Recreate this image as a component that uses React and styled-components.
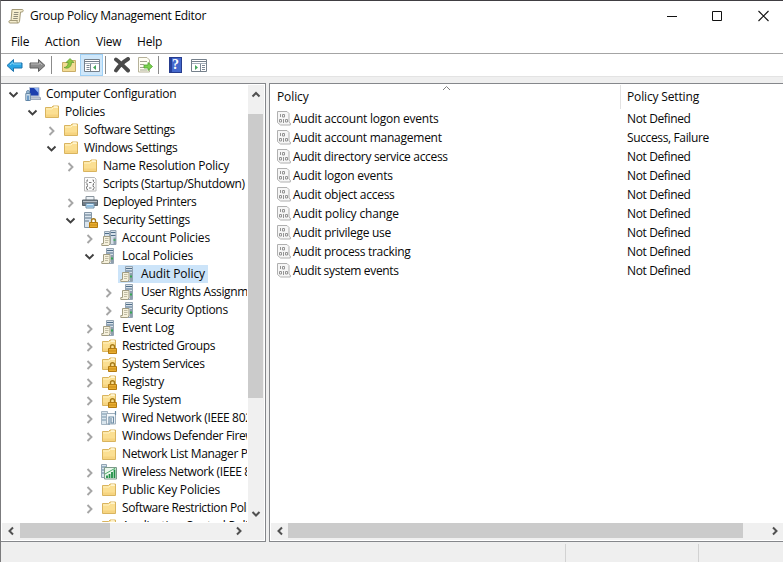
import React from 'react';
import styled, { createGlobalStyle } from 'styled-components';

const GlobalStyle = createGlobalStyle`
  * { box-sizing: border-box; }
  body { margin: 0; background: #efefef; overflow: hidden; }
`;

const Window = styled.div`
  width: 783px;
  height: 562px;
  display: flex;
  flex-direction: column;
  background: #efefef;
  border-top: 1px solid #403e42;
  border-left: 1px solid #7b7b7d;
  color: #080808;
  font: 12px/18px "Open Sans", "Noto Sans", sans-serif;
  white-space: nowrap;
  overflow: hidden;
  svg { display: block; flex: none; }
`;

const TitleBar = styled.header`
  height: 30px;
  flex: none;
  display: flex;
  align-items: center;
  padding-left: 7px;
  gap: 6px;
  background: #fff;
`;

const Text = styled.span`
  letter-spacing: ${(p) => p.$ls || 0}px;
`;

const Caption = styled.div`
  display: flex;
  margin-left: auto;
  margin-right: -4px;
  svg { width: 46px; height: 28px; }
`;

const MenuBar = styled.nav`
  height: 22px;
  flex: none;
  background: #fff;
  display: grid;
  grid-template-columns: 34px 51px 41px 60px;
  padding-left: 10px;
  align-items: center;
`;

const ToolBar = styled.div`
  height: 24px;
  flex: none;
  display: flex;
  align-items: center;
  background: #fff;
  border-top: 1px solid #a4a4a4;
  border-bottom: 1px solid #e3e3e3;
  padding-left: 2px;
`;

const ToolButton = styled.span`
  width: 23px;
  height: 22px;
  display: grid;
  place-items: center;
  background: ${(p) => (p.$active ? '#cfe7fa' : 'transparent')};
  border: 1px solid ${(p) => (p.$active ? '#9fd0f5' : 'transparent')};
`;

const ToolSeparator = styled.i`
  width: 1px;
  height: 18px;
  margin: 0 ${(p) => p.$after}px 0 ${(p) => p.$before}px;
  background: #8b8b8b;
`;

const Workspace = styled.main`
  height: 459px;
  margin-top: 6px;
  flex: none;
  display: flex;
  gap: 3px;
`;

const Pane = styled.section`
  display: flex;
  flex-direction: column;
  width: ${(p) => p.$width};
  flex: ${(p) => (p.$width ? 'none' : 1)};
  min-width: 0;
  background: #fff;
  border: solid #85878b;
  border-width: 1px ${(p) => (p.$open ? '0' : '1px')} 1px ${(p) => (p.$open ? '1px' : '0')};
  padding: 1px ${(p) => (p.$open ? '0' : '1px')} 1px 1px;
`;

const TreeBody = styled.div`
  flex: 1;
  min-height: 0;
  display: flex;
`;

const TreeList = styled.div`
  width: 245px;
  height: 437px;
  flex: none;
  overflow: hidden;
`;

const TreeRow = styled.div`
  height: 18px;
  display: flex;
  align-items: center;
  padding-left: ${(p) => 4 + p.$level * 19}px;
`;

const TreeItem = styled.div`
  height: 18px;
  display: flex;
  align-items: center;
  margin-left: 3px;
  padding-left: 2px;
  background: ${(p) => (p.$selected ? '#cce4f9' : 'transparent')};
`;

const TreeIcon = styled.span`
  width: 16px;
  margin-right: 2px;
`;

const TreeLabel = styled(Text)`
  height: 18px;
  line-height: 18px;
  padding: 0 3px;
`;

const VScroll = styled.div`
  width: 16px;
  margin-left: 1px;
  padding: 1px 0;
  display: flex;
  flex-direction: column;
  justify-content: space-between;
  background: #f0f0f0;
`;

const VThumb = styled.div`
  height: 284px;
  width: 15px;
  margin: 12px 0 auto;
  background: #cbcbcb;
`;

const HScroll = styled.div`
  height: 17px;
  flex: none;
  display: flex;
  align-items: flex-start;
  justify-content: space-between;
  background: #f0f0f0;
  padding: 0 ${(p) => p.$end || 0}px 0 1px;
`;

const HThumb = styled.div`
  width: ${(p) => p.$width}px;
  height: 15px;
  margin-left: ${(p) => p.$offset || 0}px;
  margin-right: auto;
  background: #cbcbcb;
`;

const ListBody = styled.div`
  flex: 1;
  min-height: 0;
`;

const ListHeader = styled.div`
  display: grid;
  grid-template-columns: 350px 1fr;
  height: 24px;
  line-height: 24px;
  position: relative;
  > svg { position: absolute; left: 171px; top: 0; }
`;

const HeaderCell = styled.div`
  padding-left: 6px;
  border-right: 1px solid ${(p) => (p.$last ? 'transparent' : '#e2e2e2')};
`;

const ListRow = styled.div`
  display: grid;
  grid-template-columns: 16px 334px 1fr;
  height: 19px;
  padding-left: 6px;
  align-items: center;
`;

const ListCell = styled(Text)`
  line-height: 19px;
`;

const StatusBar = styled.footer`
  flex: 1;
  display: grid;
  grid-template-columns: 565px 133px 1fr;
  padding-top: 2px;
`;

const StatusCell = styled.div`
  border-right: 1px solid ${(p) => (p.$last ? 'transparent' : '#d2d2d2')};
`;

const ARROWS = {
  up: 'M4.500 10.500 8 7l3.500 3.500',
  down: 'M4.500 6 8 9.500 11.500 6',
  left: 'M10 4.500 6.500 8l3.500 3.500',
  right: 'M6 4.500 9.500 8l-3.500 3.500',
};

const ScrollArrow = ({ dir }) => (
  <svg width="16" height="16" viewBox="0 0 16 16" fill="none" stroke="#505050" strokeWidth="2">
    <path d={ARROWS[dir]} />
  </svg>
);

const Twisty = ({ state }) => (
  <svg width="14" height="14" viewBox="0 0 14 14" fill="none" strokeWidth="1.9" stroke={state === 'open' ? '#404040' : '#a6a6a6'}>
    {state === 'open' && <path d="M3.500 5.500 7.500 9.500l4-4" />}
    {state === 'closed' && <path d="M5.500 4l4 4-4 4" />}
  </svg>
);

const Folder = () => (
  <>
    <path d="M1.500 13.500v-10h6l1.500-1.500h5.500v11.500z" fill="#fbdf92" stroke="#d9b45f" />
    <path d="M2 5h6l1.500-1.500H14" fill="none" stroke="#fff3c4" />
    <path d="M10 2.800h3.500" stroke="#fff8df" />
    <path d="M2 10.500h12V13H2z" fill="#f3cd74" opacity=".6" />
  </>
);

const Lock = () => (
  <>
    <path d="M9.500 11V8.800c0-2.800 4-2.800 4 0V11" fill="none" stroke="#a67a17" strokeWidth="1.400" />
    <path d="M7.500 10.500h8v5h-8z" fill="#e9ae30" stroke="#b37a10" />
    <path d="M8 13h7" stroke="#c98b16" />
  </>
);

const Server = () => (
  <>
    <path d="M5.500.5h7v15h-7z" fill="#d5dfe8" stroke="#94a4b2" />
    <path d="M6 2.500h6M6 5h6" stroke="#4e6d88" />
    <path d="M10 7h2v8h-2z" fill="#8f9fae" />
    <path d="M10 10.500h2" stroke="#36a852" strokeWidth="1.800" />
  </>
);

const Scroll = () => (
  <>
    <path d="M2.500 6.500h6.500v7.500l-1.500 1.500H.8v-2h1.700z" fill="#f6f1dc" stroke="#a19c82" />
    <path d="M4 8.500h3.500M4 10.500h3.500M4 12.500h3" stroke="#c0bca4" />
  </>
);

const TREE_ICONS = {
  computer: (
    <>
      <path d="M4.500 1.500h9.500v8.500H4.500z" fill="#1d3fae" stroke="#b9c4d8" />
      <path d="M9 2h4.500v5z" fill="#8fb4f4" />
      <path d="M5 11h10l1 2.500H6z" fill="#c3cad6" stroke="#8d9bb0" strokeWidth=".8" />
      <path d="M.8 7.500h4.500v7H.8z" fill="#cfe0ee" stroke="#6c8aa6" />
      <path d="M3 4.500a1.500 1.500 0 1 1 0 3 1.500 1.500 0 0 1 0-3z" fill="#a9c7e0" stroke="#587b9d" strokeWidth=".8" />
      <path d="M3 9.500v5" stroke="#3a78b5" strokeWidth="1.300" />
    </>
  ),
  folder: <Folder />,
  lockedFolder: (
    <>
      <Folder />
      <Lock />
    </>
  ),
  script: (
    <>
      <path d="M2.500 1.500h10l1.500 1.500v12H2.500z" fill="#fcfcfc" stroke="#b8b8b8" />
      <path d="M6 4H5v1.500L4 6.500l1 1V9h1M10.500 4h1v1.500l1 1-1 1V9h-1M7 6.500h2.500M6 10H5v1l-1 .8 1 .8v1h1M10.500 10h1v1l1 .8-1 .8v1h-1M7 12h2.500" fill="none" stroke="#777" />
    </>
  ),
  printer: (
    <>
      <path d="M4 2.500h8v4H4z" fill="#eef3f7" stroke="#8a959e" />
      <path d="M.5 6h15v5.500H.5z" fill="#727c86" stroke="#59636b" />
      <path d="M1 7.500h14" stroke="#b4bdc4" />
      <path d="M4 9.500h8v4.500H4z" fill="#d6ebfa" stroke="#688da8" />
      <path d="M5 12h6" stroke="#4a94c8" />
    </>
  ),
  secure: (
    <>
      <path d="M2.500.5h7v15h-7z" fill="#dbe5ee" stroke="#8496a6" />
      <path d="M3 3h6M3 6h6M3 9h4" stroke="#5b7489" />
      <Lock />
    </>
  ),
  account: (
    <>
      <path d="M3.500 1.500h5v13h-5z" fill="#d4e0ea" stroke="#94a4b2" />
      <path d="M4 3.500h4" stroke="#4e6d88" />
      <path d="M9.500.5h5.500v14H9.500z" fill="#d5dfe8" stroke="#94a4b2" />
      <path d="M10 2.500h4.500M10 5.500h4.500" stroke="#4e6d88" />
      <path d="M12.500 7.500H15v7h-2.500z" fill="#8f9fae" />
      <path d="M12.500 10h2" stroke="#36a852" strokeWidth="1.500" />
      <Scroll />
    </>
  ),
  policy: (
    <>
      <Server />
      <Scroll />
    </>
  ),
  wired: (
    <>
      <path d="M.5 1.500h6v13h-6z" fill="#d9e5ed" stroke="#a5b5c2" />
      <path d="M1 4h5M1 7h5M1 10h5" stroke="#7593a9" />
      <path d="M5.500 3.500h9v10.500h-9z" fill="#f4f8fb" stroke="#a0afbc" />
      <path d="M14.500 1v4M8 15V7h4.500v6H10V8" fill="none" stroke="#6b8ba4" strokeWidth="1.200" />
    </>
  ),
  wireless: (
    <>
      <path d="M.5.5h5v13h-5z" fill="#d9e5ed" stroke="#91a5b5" />
      <path d="M1 3h4M1 6h4M1 9h3" stroke="#5b7f99" />
      <path d="M3.500 3.500h12v11.500h-12z" fill="#eaf6ec" stroke="#7d9a8a" />
      <path d="M6 14v-2.500M8.500 14v-4M11 14V8M13.500 14V5.500" stroke="#1f8f45" strokeWidth="1.800" />
      <path d="M4 10 14.500 4" stroke="#4fae6b" />
    </>
  ),
};

const Glyph = ({ name }) => (
  <svg width="16" height="16" viewBox="0 0 16 16">{TREE_ICONS[name]}</svg>
);

const PolicyItemIcon = () => (
  <svg width="14" height="15" viewBox="0 0 14 15" fill="none" stroke="#b0b0b0">
    <path d="M.5.5h9.500l2 2v8.500l1.300 1v2H3.500L.5 11.500z" fill="#f6f6f6" />
    <path d="M3.500 3v3M5.500 3.500h2v2.500h-2zM2.500 8.500h2v2.500h-2zM6.500 8v4M8.500 8.500h2v2.500h-2z" stroke="#949494" />
  </svg>
);

const AppIcon = () => (
  <svg width="16" height="16" viewBox="0 0 16 16">
    <path d="M4 1.500h10.500c1 0 1 2.500-.5 2.500h-1.500l-1 9.500c0 1-1 1.500-2 1.500H2c-1.500 0-1.500-2.500 0-2.500h1z" fill="#f5edcf" stroke="#a39a78" />
    <path d="M6 4.500h4.500M5.700 6.500h4.500M5.500 8.500h4.500M5.200 10.500h4.500" stroke="#8f8c7c" />
    <path d="M3 12.500h6.500c-1 1 0 2.500.5 2.500" fill="none" stroke="#a39a78" />
  </svg>
);

const ArrowIcon = ({ back }) => (
  <svg width="17" height="15" viewBox="0 0 17 15">
    <path
      d={back ? 'M1 7.500 7.500 1.500V5H16v5H7.500v3.500z' : 'M16 7.500 9.500 1.500V5H1v5h8.500v3.500z'}
      fill={back ? '#2ba5e4' : '#8c8c8c'}
      stroke={back ? '#1d73ad' : '#5f5f5f'}
    />
    <path d={back ? 'M4 7 7 4.500V6h8' : 'M2 6h8.500V4.500L13 7'} fill="none" stroke={back ? '#85d6f8' : '#b9b9b9'} />
  </svg>
);

const UpFolderIcon = () => (
  <svg width="16" height="16" viewBox="0 0 16 16">
    <path d="M1.500 14.500v-9h5l1.500-2h6.500v11z" fill="#f3dc94" stroke="#c9ad68" />
    <path d="M3 10.500c3 0 4-2.500 4.200-5H5l4-4 4 4h-2.500c0 4-3 7-7.500 5z" fill="#8cc63f" stroke="#5d9a30" strokeWidth=".7" />
  </svg>
);

const ConsoleIcon = ({ flip }) => (
  <svg width="16" height="15" viewBox="0 0 16 15">
    <path d="M.5 1.500h15v12H.5z" fill="#fff" stroke="#75808b" />
    <path d="M1 3.500h14" stroke="#75808b" />
    <path d="M11 2.500h3" stroke="#fff" />
    <path d="M1 5.500h14" stroke="#a6b1bb" />
    <path d={flip ? 'M9.500 6v7M11 7.500h3M11 9.500h3M11 11.500h3' : 'M6.500 6v7M2.500 7.500h3M2.500 9.500h3M2.500 11.500h3'} stroke="#7c8894" />
    <path d={flip ? 'M4 7 7 9.500 4 12z' : 'M12 7 9 9.500l3 2.500z'} fill="#45a65a" />
  </svg>
);

const DeleteIcon = () => (
  <svg width="18" height="16" viewBox="0 0 18 16">
    <path d="M3 2.500c4 3 8 7 12 11M15 2c-5 3-9 7-12 11.500" fill="none" stroke="#4a4a4a" strokeWidth="3.900" strokeLinecap="round" />
  </svg>
);

const ExportIcon = () => (
  <svg width="16" height="16" viewBox="0 0 16 16">
    <path d="M1.500.5h8.500l2.500 2.500v12h-11z" fill="#fffef2" stroke="#b6b29a" />
    <path d="M3 4.500h7M3 7.500h4M3 10.500h4M3 13h7" stroke="#a3a38f" />
    <path d="M7 8h4V5.500l4.500 4-4.500 4V11H7z" fill="#7bd04e" stroke="#4da42e" strokeWidth=".8" />
  </svg>
);

const HelpGlyph = styled.span`
  width: 13px;
  height: 16px;
  background: linear-gradient(90deg, #27409c 2px, #4468cc 2px);
  border: 1px solid #263c8d;
  color: #fff;
  font: bold 14px/14px "Liberation Serif", serif;
  text-align: center;
`;

const TREE = [
  [0, 'open', 'computer', 'Computer Configuration', -0.27],
  [1, 'open', 'folder', 'Policies', -0.2],
  [2, 'closed', 'folder', 'Software Settings', -0.38],
  [2, 'open', 'folder', 'Windows Settings', -0.33],
  [3, 'closed', 'folder', 'Name Resolution Policy', -0.24],
  [3, 'none', 'script', 'Scripts (Startup/Shutdown)', -0.33],
  [3, 'closed', 'printer', 'Deployed Printers', -0.42],
  [3, 'open', 'secure', 'Security Settings', -0.32],
  [4, 'closed', 'account', 'Account Policies', -0.13],
  [4, 'open', 'policy', 'Local Policies', -0.2],
  [5, 'none', 'policy', 'Audit Policy', -0.08],
  [5, 'closed', 'policy', 'User Rights Assignment', -0.35],
  [5, 'closed', 'policy', 'Security Options', -0.33],
  [4, 'closed', 'policy', 'Event Log', -0.25],
  [4, 'closed', 'lockedFolder', 'Restricted Groups', -0.45],
  [4, 'closed', 'lockedFolder', 'System Services', -0.44],
  [4, 'closed', 'lockedFolder', 'Registry', -0.35],
  [4, 'closed', 'lockedFolder', 'File System', -0.32],
  [4, 'closed', 'wired', 'Wired Network (IEEE 802.3) Policies', -0.35],
  [4, 'closed', 'folder', 'Windows Defender Firewall', -0.35],
  [4, 'none', 'folder', 'Network List Manager Policies', -0.35],
  [4, 'closed', 'wireless', 'Wireless Network (IEEE 802.11) Policies', -0.38],
  [4, 'closed', 'folder', 'Public Key Policies', -0.2],
  [4, 'closed', 'folder', 'Software Restriction Policies', -0.37],
  [4, 'closed', 'folder', 'Application Control Policies', -0.2],
];

const POLICIES = [
  ['Audit account logon events', 'Not Defined', -0.23],
  ['Audit account management', 'Success, Failure', -0.25],
  ['Audit directory service access', 'Not Defined', -0.32],
  ['Audit logon events', 'Not Defined', -0.24],
  ['Audit object access', 'Not Defined', -0.26],
  ['Audit policy change', 'Not Defined', -0.14],
  ['Audit privilege use', 'Not Defined', -0.26],
  ['Audit process tracking', 'Not Defined', -0.3],
  ['Audit system events', 'Not Defined', -0.35],
];

export default function App() {
  return (
    <Window>
      <GlobalStyle />
      <TitleBar>
        <AppIcon />
        <Text $ls={-0.29}>Group Policy Management Editor</Text>
        <Caption>
          <svg viewBox="0 0 46 28"><path d="M18 14.500h10" stroke="#111" /></svg>
          <svg viewBox="0 0 46 28"><path d="M17.500 9.500h9v9h-9z" fill="none" stroke="#111" /></svg>
          <svg viewBox="0 0 46 28"><path d="M17.500 9 27.500 19M27.500 9 17.500 19" stroke="#111" strokeWidth="1.100" /></svg>
        </Caption>
      </TitleBar>
      <MenuBar>
        <Text $ls={-0.2}>File</Text>
        <Text>Action</Text>
        <Text $ls={-0.2}>View</Text>
        <Text $ls={-0.2}>Help</Text>
      </MenuBar>
      <ToolBar>
        <ToolButton><ArrowIcon back /></ToolButton>
        <ToolButton><ArrowIcon /></ToolButton>
        <ToolSeparator $before={2} $after={5} />
        <ToolButton><UpFolderIcon /></ToolButton>
        <ToolButton $active><ConsoleIcon /></ToolButton>
        <ToolSeparator $before={2} $after={4} />
        <ToolButton><DeleteIcon /></ToolButton>
        <ToolButton><ExportIcon /></ToolButton>
        <ToolSeparator $before={2} $after={5} />
        <ToolButton><HelpGlyph>?</HelpGlyph></ToolButton>
        <ToolButton><ConsoleIcon flip /></ToolButton>
      </ToolBar>
      <Workspace>
        <Pane $width="265px">
          <TreeBody>
            <TreeList>
              {TREE.map(([level, state, icon, label, ls]) => (
                <TreeRow key={label} $level={level}>
                  <Twisty state={state} />
                  <TreeItem $selected={label === 'Audit Policy'}>
                    <TreeIcon><Glyph name={icon} /></TreeIcon>
                    <TreeLabel $ls={ls}>{label}</TreeLabel>
                  </TreeItem>
                </TreeRow>
              ))}
            </TreeList>
            <VScroll>
              <ScrollArrow dir="up" />
              <VThumb />
              <ScrollArrow dir="down" />
            </VScroll>
          </TreeBody>
          <HScroll $end={17}>
            <ScrollArrow dir="left" />
            <HThumb $width={90} $offset={1} />
            <ScrollArrow dir="right" />
          </HScroll>
        </Pane>
        <Pane $open>
          <ListBody>
            <ListHeader>
              <HeaderCell><Text $ls={-0.1}>Policy</Text></HeaderCell>
              <HeaderCell $last><Text $ls={-0.15}>Policy Setting</Text></HeaderCell>
              <svg width="9" height="6" viewBox="0 0 9 6" fill="none" stroke="#808080"><path d="M1 5 4.500 1.500 8 5" /></svg>
            </ListHeader>
            {POLICIES.map(([name, setting, ls]) => (
              <ListRow key={name}>
                <PolicyItemIcon />
                <ListCell $ls={ls}>{name}</ListCell>
                <ListCell $ls={-0.37}>{setting}</ListCell>
              </ListRow>
            ))}
          </ListBody>
          <HScroll>
            <ScrollArrow dir="left" />
            <HThumb $width={455} />
            <ScrollArrow dir="right" />
          </HScroll>
        </Pane>
      </Workspace>
      <StatusBar>
        <StatusCell />
        <StatusCell />
        <StatusCell $last />
      </StatusBar>
    </Window>
  );
}
